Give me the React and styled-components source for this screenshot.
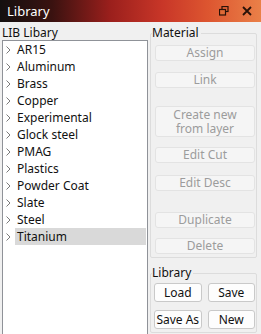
import React from 'react'
import styled, { createGlobalStyle } from 'styled-components'

const GlobalStyle = createGlobalStyle`
  *, *::before, *::after { box-sizing: border-box; }
  html, body { margin: 0; padding: 0; background: #f0f0f0; }
  body { font-family: "Noto Sans", "DejaVu Sans", sans-serif; font-size: 12px; color: #111; }
`

const materials = [
  'AR15', 'Aluminum', 'Brass', 'Copper', 'Experimental', 'Glock steel',
  'PMAG', 'Plastics', 'Powder Coat', 'Slate', 'Steel', 'Titanium',
]

const materialButtons = [
  { label: 'Assign', gap: 5 },
  { label: 'Link', gap: 11 },
  { label: 'Create new\nfrom layer', gap: 18, tall: true },
  { label: 'Edit Cut', gap: 10 },
  { label: 'Edit Desc', gap: 12 },
  { label: 'Duplicate', gap: 21 },
  { label: 'Delete', gap: 10 },
]

export default function App() {
  return (
    <>
      <GlobalStyle />
      <Window>
        <TitleBar>
          <Title>Library</Title>
          <TitleIcons>
            <svg width="10" height="10" viewBox="0 0 10 10">
              <rect x="3" y="0.5" width="6" height="5" fill="none" stroke="#2a1208" strokeWidth="1.2" />
              <rect x="0.5" y="3.5" width="6" height="5.5" fill="#e06a36" stroke="#2a1208" strokeWidth="1.2" />
            </svg>
            <svg width="10" height="10" viewBox="0 0 10 10">
              <path d="M1 1 L9 9 M9 1 L1 9" stroke="#2a1208" strokeWidth="1.8" />
            </svg>
          </TitleIcons>
        </TitleBar>
        <Body>
          <LeftColumn>
            <Label>LIB Libary</Label>
            <ListBox>
              {materials.map((m) => (
                <Row key={m}>
                  <Chevron viewBox="0 0 5 8" width="5" height="8">
                    <path d="M0.5 0.5 L4 4 L0.5 7.5" fill="none" stroke="#7a7a7a" strokeWidth="1" />
                  </Chevron>
                  <ItemText selected={m === 'Titanium'}>{m}</ItemText>
                </Row>
              ))}
            </ListBox>
          </LeftColumn>
          <RightColumn>
            <Group>
              <Legend>Material</Legend>
              {materialButtons.map((b) => (
                <DisabledButton key={b.label} gap={b.gap} tall={b.tall}>
                  {b.label}
                </DisabledButton>
              ))}
            </Group>
            <Group>
              <Legend>Library</Legend>
              <ButtonGrid>
                <Button>Load</Button>
                <Button>Save</Button>
                <Button>Save As</Button>
                <Button>New</Button>
              </ButtonGrid>
            </Group>
          </RightColumn>
        </Body>
      </Window>
    </>
  )
}

const Window = styled.div`
  width: 261px;
  height: 334px;
  display: flex;
  flex-direction: column;
  overflow: hidden;
  background: #f0f0f0;
`

const TitleBar = styled.div`
  height: 22px;
  flex-shrink: 0;
  display: flex;
  align-items: center;
  justify-content: space-between;
  padding: 0 9px 0 7px;
  background: linear-gradient(90deg, #141010 0%, #3a1210 20%, #9a1f1c 42%, #c83628 62%, #dd5630 80%, #ea8048 100%);
`

const Title = styled.span`
  color: #fff;
  font-size: 13px;
`

const TitleIcons = styled.div`
  display: flex;
  align-items: center;
  gap: 13px;
`

const Body = styled.div`
  flex: 1;
  display: flex;
  gap: 2px;
  padding: 4px 4px 0 2px;
  min-height: 0;
`

const LeftColumn = styled.div`
  width: 146px;
  display: flex;
  flex-direction: column;
`

const Label = styled.div`
  height: 14px;
  line-height: 14px;
`

const ListBox = styled.div`
  flex: 1;
  background: #fff;
  border: 1px solid #8f9298;
  border-bottom: none;
`

const Row = styled.div`
  height: 17px;
  display: flex;
  align-items: center;
  padding-left: 3px;
`

const Chevron = styled.svg`
  flex-shrink: 0;
  margin-right: 4px;
`

const ItemText = styled.span`
  flex: 1;
  height: 17px;
  line-height: 17px;
  padding-left: 2px;
  margin-right: 1px;
  background: ${(p) => (p.selected ? '#d9d9d9' : 'transparent')};
`

const RightColumn = styled.div`
  flex: 1;
  display: flex;
  flex-direction: column;
  gap: 8px;
`

const Group = styled.fieldset`
  margin: 0;
  padding: 0 1px 3px 4px;
  min-width: 0;
  border: 1px solid #dcdcdc;
  border-radius: 2px;
  display: flex;
  flex-direction: column;
`

const Legend = styled.legend`
  padding: 0 2px 0 0;
  margin-left: -3px;
  line-height: 14px;
`

const DisabledButton = styled.div`
  margin-top: ${(p) => p.gap}px;
  height: ${(p) => (p.tall ? 31 : 16)}px;
  display: flex;
  align-items: center;
  justify-content: center;
  text-align: center;
  white-space: pre-line;
  line-height: 14px;
  color: #9c9c9c;
  background: #f5f5f5;
  border: 1px solid #e3e3e3;
  border-radius: 3px;
`

const ButtonGrid = styled.div`
  display: grid;
  grid-template-columns: 1fr 1fr;
  column-gap: 6px;
  row-gap: 8px;
  padding-top: 3px;
  margin-left: -1px;
`

const Button = styled.div`
  height: 19px;
  display: flex;
  align-items: center;
  justify-content: center;
  color: #111;
  background: #fdfdfd;
  border: 1px solid #c9c9c9;
  border-radius: 3px;
`
